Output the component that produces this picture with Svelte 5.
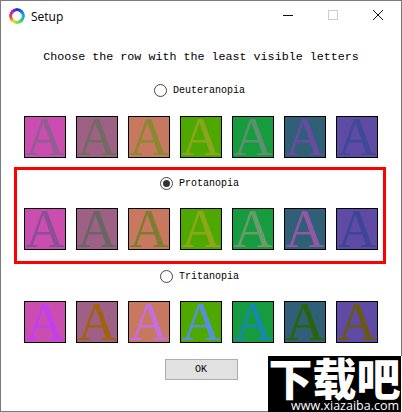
<script>
  const bgs = ['#cc4db0', '#9f6085', '#c97860', '#4fa800', '#169b3f', '#305f78', '#5f4aa5'];
  const rows = [
    { name: 'Deuteranopia', colors: ['#8f5f92', '#6f6d62', '#878a2e', '#8aa51e', '#5e8f70', '#6a4aa3', '#3d4a96'] },
    { name: 'Protanopia', selected: true, colors: ['#8a4f95', '#666662', '#7d7d32', '#8ea61c', '#6b9b6c', '#9358a5', '#3d4696'] },
    { name: 'Tritanopia', colors: ['#c040f0', '#a0620f', '#c46ee0', '#5590d8', '#1a87b0', '#2a6408', '#6a5a10'] }
  ];
</script>

<div class="window">
  <div class="titlebar">
    <span class="logo"></span>
    <span class="title">Setup</span>
    <span class="controls">
      <svg width="12" height="12" viewBox="0 0 12 12"><path d="M1 6.5h10" stroke="#111" fill="none" /></svg>
      <svg width="12" height="12" viewBox="0 0 12 12"><rect x="1.5" y="1.5" width="9" height="9" stroke="#ccc" fill="none" /></svg>
      <svg width="12" height="12" viewBox="0 0 12 12"><path d="M1 1l10 10M11 1L1 11" stroke="#111" fill="none" /></svg>
    </span>
  </div>

  <p class="heading">Choose the row with the least visible letters</p>

  {#each rows as row}
    <section class="row" class:selected={row.selected}>
      <label class="option">
        <span class="radio"></span>
        <span>{row.name}</span>
      </label>
      <div class="tiles">
        {#each row.colors as color, i}
          <div class="tile" style="background: {bgs[i]}; color: {color}">A</div>
        {/each}
      </div>
    </section>
  {/each}

  <div class="footer">
    <button>OK</button>
  </div>

  <div class="watermark">
    <div class="wm-big">下载吧</div>
    <div class="wm-url">www.xiazaiba.com</div>
  </div>
</div>

<style>
  :global(body) {
    margin: 0;
    background: #fff;
  }

  .window {
    position: relative;
    width: 402px;
    height: 412px;
    box-sizing: border-box;
    border: 1px solid #7a7a7a;
    background: #fff;
    font-family: "Liberation Mono", monospace;
    color: #000;
  }

  .titlebar {
    display: flex;
    align-items: center;
    height: 28px;
    padding-left: 8px;
  }

  .logo {
    width: 16px;
    height: 16px;
    margin-top: 1px;
    border-radius: 50%;
    background: conic-gradient(#1030e0, #18a0e8 20%, #20c8a0 35%, #90e020 50%, #f0e020 60%, #f04030 72%, #c020d0 88%, #1030e0);
    mask: radial-gradient(circle, transparent 4.5px, #000 5px);
  }

  .title {
    margin: 2px 0 0 6px;
    font: 12px "Open Sans", sans-serif;
  }

  .controls {
    margin-left: auto;
    margin-right: 17px;
    display: flex;
    gap: 33px;
  }

  .heading {
    margin: 18px 0 11px;
    text-align: center;
    font-size: 11.7px;
    line-height: 20px;
    height: 20px;
  }

  .row {
    box-sizing: border-box;
    width: 372px;
    margin: -4px 0 0 13px;
    height: 97px;
    padding: 5px 0 0 2px;
    border: 3px solid transparent;
    display: flex;
    flex-direction: column;
    align-items: center;
  }

  .selected {
    border-color: #f00;
  }

  .option {
    display: flex;
    align-items: center;
    gap: 6px;
    font-size: 10px;
    height: 17px;
    padding-right: 3px;
  }

  .radio {
    width: 13px;
    height: 13px;
    border: 1px solid #444;
    border-radius: 50%;
    box-sizing: border-box;
    position: relative;
  }

  .selected .radio::after {
    content: "";
    position: absolute;
    inset: 2px;
    border-radius: 50%;
    background: #333;
  }

  .tiles {
    display: flex;
    gap: 10px;
    margin-top: 16px;
  }

  .row:first-of-type .tiles {
    margin-top: 17px;
  }

  .tile {
    box-sizing: border-box;
    width: 42px;
    height: 42px;
    border: 1px solid #000;
    text-align: center;
    font: 54px/40px "Liberation Serif", serif;
  }

  .footer {
    display: flex;
    justify-content: center;
    margin-top: 2px;
  }

  button {
    width: 73px;
    height: 21px;
    padding: 0;
    border: 1px solid #adadad;
    background: #e1e1e1;
    font: 10px "Liberation Mono", monospace;
    color: #000;
  }

  .watermark {
    position: absolute;
    right: -1px;
    bottom: -1px;
    width: 133px;
    height: 56px;
    border-right: 1px solid #fff;
    background: #000;
    color: #fff;
  }

  .wm-big {
    font: 900 44px/43px "Noto Sans CJK SC", sans-serif;
    text-align: center;
    height: 43px;
  }

  .wm-url {
    font: 12.5px/13px "Open Sans", sans-serif;
    text-align: right;
    padding-right: 2px;
  }
</style>
